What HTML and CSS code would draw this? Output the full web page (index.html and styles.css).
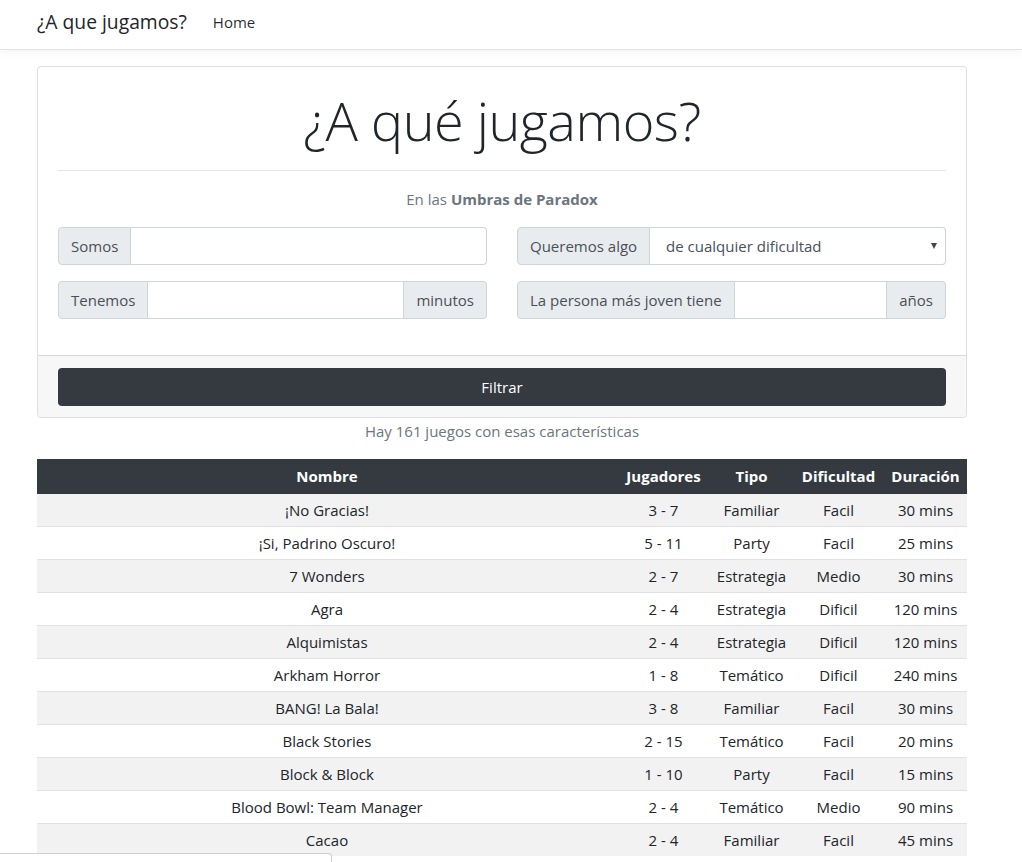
FILE: index.html
```html
<!DOCTYPE html>
<html lang="es">
<head>
<meta charset="utf-8">
<title>¿A que jugamos?</title>
<link rel="stylesheet" href="styles.css">
</head>
<body>
<nav class="navbar">
  <div class="nav-inner">
    <a class="brand" href="#">¿A que jugamos?</a>
    <a class="nav-link" href="#">Home</a>
  </div>
</nav>
<main class="container">
  <section class="card">
    <div class="card-body">
      <h1 class="title">¿A qué jugamos?</h1>
      <hr class="divider">
      <p class="subtitle">En las <strong>Umbras de Paradox</strong></p>
      <div class="form-grid">
        <div class="input-group">
          <span class="addon">Somos</span>
          <span class="field"></span>
        </div>
        <div class="input-group">
          <span class="addon">Queremos algo</span>
          <span class="field select">de cualquier dificultad<span class="caret"></span></span>
        </div>
        <div class="input-group">
          <span class="addon">Tenemos</span>
          <span class="field"></span>
          <span class="addon addon-end">minutos</span>
        </div>
        <div class="input-group">
          <span class="addon">La persona más joven tiene</span>
          <span class="field"></span>
          <span class="addon addon-end">años</span>
        </div>
      </div>
    </div>
    <div class="card-footer">
      <button class="btn-dark" type="button">Filtrar</button>
    </div>
  </section>
  <p class="count">Hay 161 juegos con esas características</p>
  <table class="games">
    <colgroup>
      <col class="c-name"><col class="c-players"><col class="c-type"><col class="c-diff"><col class="c-dur">
    </colgroup>
    <thead>
      <tr><th>Nombre</th><th>Jugadores</th><th>Tipo</th><th>Dificultad</th><th>Duración</th></tr>
    </thead>
    <tbody>
      <tr><td>¡No Gracias!</td><td>3 - 7</td><td>Familiar</td><td>Facil</td><td>30 mins</td></tr>
      <tr><td>¡Si, Padrino Oscuro!</td><td>5 - 11</td><td>Party</td><td>Facil</td><td>25 mins</td></tr>
      <tr><td>7 Wonders</td><td>2 - 7</td><td>Estrategia</td><td>Medio</td><td>30 mins</td></tr>
      <tr><td>Agra</td><td>2 - 4</td><td>Estrategia</td><td>Dificil</td><td>120 mins</td></tr>
      <tr><td>Alquimistas</td><td>2 - 4</td><td>Estrategia</td><td>Dificil</td><td>120 mins</td></tr>
      <tr><td>Arkham Horror</td><td>1 - 8</td><td>Temático</td><td>Dificil</td><td>240 mins</td></tr>
      <tr><td>BANG! La Bala!</td><td>3 - 8</td><td>Familiar</td><td>Facil</td><td>30 mins</td></tr>
      <tr><td>Black Stories</td><td>2 - 15</td><td>Temático</td><td>Facil</td><td>20 mins</td></tr>
      <tr><td>Block &amp; Block</td><td>1 - 10</td><td>Party</td><td>Facil</td><td>15 mins</td></tr>
      <tr><td>Blood Bowl: Team Manager</td><td>2 - 4</td><td>Temático</td><td>Medio</td><td>90 mins</td></tr>
      <tr><td>Cacao</td><td>2 - 4</td><td>Familiar</td><td>Facil</td><td>45 mins</td></tr>
    </tbody>
  </table>
</main>
<div class="status-bubble" aria-hidden="true"></div>
</body>
</html>
```
FILE: styles.css
```css
* { box-sizing: border-box; }
html, body { margin: 0; padding: 0; }
body {
  font-family: "Open Sans", "Noto Sans", "Liberation Sans", sans-serif;
  font-size: 15px;
  line-height: 24px;
  color: #212529;
  background: #fff;
  overflow: hidden;
}
.navbar {
  height: 50px;
  background: #fff;
  border-bottom: 1px solid #e3e3e3;
  box-shadow: 0 2px 8px rgba(0,0,0,0.05);
  position: relative;
}
.nav-inner {
  display: flex;
  align-items: center;
  height: 100%;
  padding-left: 37px;
  padding-bottom: 6px;
}
.brand {
  font-size: 19.3px;
  color: #212529;
  text-decoration: none;
  margin-right: 26px;
}
.nav-link {
  font-size: 15px;
  color: rgba(0,0,0,0.85);
  text-decoration: none;
}
.container {
  width: 930px;
  margin-left: 37px;
  padding-top: 16px;
}
.card {
  border: 1px solid rgba(0,0,0,0.125);
  border-radius: 4px;
}
.card-body {
  padding: 20px 20px 20px;
}
.title {
  margin: 0;
  font-size: 54px;
  font-weight: 300;
  line-height: 67px;
  text-align: center;
  color: #212529;
  letter-spacing: -0.5px;
}
.divider {
  margin: 16px 0 0;
  border: 0;
  border-top: 1px solid rgba(0,0,0,0.1);
}
.subtitle {
  margin: 16px 0 16px;
  text-align: center;
  color: #6c757d;
}
.subtitle strong { font-weight: 700; }
.form-grid {
  display: grid;
  grid-template-columns: 1fr 1fr;
  column-gap: 30px;
  row-gap: 16px;
  margin-bottom: 16px;
}
.input-group {
  display: flex;
  height: 38px;
}
.addon {
  display: flex;
  align-items: center;
  padding: 0 12px;
  background: #e9ecef;
  border: 1px solid #ced4da;
  color: #495057;
  white-space: nowrap;
  border-radius: 4px 0 0 4px;
}
.addon-end {
  border-radius: 0 4px 4px 0;
  border-left: 0;
}
.field {
  flex: 1;
  border: 1px solid #ced4da;
  border-left: 0;
  background: #fff;
  border-radius: 0 4px 4px 0;
}
.input-group .field:not(:last-child) { border-radius: 0; }
.select {
  display: flex;
  align-items: center;
  padding-left: 16px;
  padding-right: 8px;
  color: #495057;
  position: relative;
}
.caret {
  margin-left: auto;
  width: 0;
  height: 0;
  border-left: 3.5px solid transparent;
  border-right: 3.5px solid transparent;
  border-top: 6px solid #444;
}
.card-footer {
  padding: 12px 20px 11px;
  background: #f7f7f7;
  border-top: 1px solid rgba(0,0,0,0.125);
  border-radius: 0 0 4px 4px;
}
.btn-dark {
  display: block;
  width: 100%;
  height: 38px;
  border: 0;
  border-radius: 4px;
  background: #343a40;
  color: #fff;
  font: inherit;
  cursor: pointer;
}
.count {
  margin: 1px 0 16px;
  text-align: center;
  color: #6c757d;
}
.games {
  width: 930px;
  border-collapse: collapse;
  table-layout: fixed;
  text-align: center;
}
.c-name { width: 580px; }
.c-players { width: 93px; }
.c-type { width: 83px; }
.c-diff { width: 91px; }
.c-dur { width: 83px; }
.games th {
  background: #343a40;
  color: #fff;
  font-weight: 700;
  padding: 5px 2px 4px;
  border-bottom: 2px solid #32383e;
  white-space: nowrap;
}
.games td {
  padding: 4px 2px;
  border-top: 1px solid #dee2e6;
  white-space: nowrap;
}
.games tbody tr:first-child td { border-top: 0; height: 32px; }
.games tbody tr:nth-child(odd) { background: #f2f2f2; }
.status-bubble {
  position: fixed;
  left: 0;
  bottom: -9px;
  width: 332px;
  height: 18px;
  background: #fff;
  border: 1px solid #d0d0d0;
  border-left: 0;
  border-top-right-radius: 4px;
}
```
